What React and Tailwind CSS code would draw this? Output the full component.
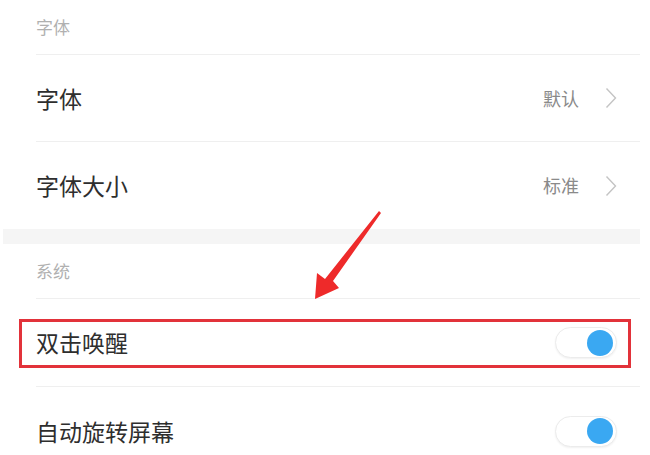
import React from "react";

const font = { fontFamily: '"Noto Sans CJK SC", "Noto Sans", sans-serif' };

function Chevron() {
  return (
    <svg width="12" height="22" viewBox="0 0 12 22" fill="none" className="ml-[26px]">
      <path d="M1.5 1.5 L10.5 11 L1.5 20.5" stroke="#c4c4c4" strokeWidth="1.4" />
    </svg>
  );
}

function Toggle() {
  return (
    <div className="w-[62px] h-[31px] rounded-full bg-white border border-[#ececec] shadow-[0_1px_2px_rgba(0,0,0,0.06)] flex items-center justify-end pr-[3px]">
      <div className="w-[26px] h-[26px] rounded-full bg-[#3aa8f2]" />
    </div>
  );
}

function Header({ title }) {
  return (
    <div className="h-[55px] ml-[36px] mr-[10px] border-b border-[#efefef] flex items-center">
      <span className="text-[17px] text-[#b0b0b0]">{title}</span>
    </div>
  );
}

function LinkRow({ label, value, last }) {
  return (
    <div
      className={
        "h-[87px] ml-[36px] mr-[10px] flex items-center justify-between pr-[23px] " +
        (last ? "" : "border-b border-[#efefef]")
      }
    >
      <span className="text-[23px] text-[#2e2e2e]">{label}</span>
      <div className="flex items-center">
        <span className="text-[18px] text-[#8a8a8a]">{value}</span>
        <Chevron />
      </div>
    </div>
  );
}

function SwitchRow({ label, last, children }) {
  return (
    <div
      className={
        "relative h-[88px] ml-[36px] mr-[10px] flex items-center justify-between pr-[23px] " +
        (last ? "" : "border-b border-[#efefef]")
      }
    >
      <span className="text-[23px] text-[#2e2e2e]">{label}</span>
      <Toggle />
      {children}
    </div>
  );
}

export default function App() {
  return (
    <div className="relative w-[650px] h-[455px] overflow-hidden bg-white" style={font}>
      <Header title="字体" />
      <LinkRow label="字体" value="默认" />
      <LinkRow label="字体大小" value="标准" last />
      <div className="h-[15px] bg-[#f5f5f5] ml-[3px] mr-[10px]" />
      <Header title="系统" />
      <SwitchRow label="双击唤醒">
        {/* red annotation box */}
        <div className="absolute left-[-17px] right-[9px] top-[20px] h-[49px] border-[3px] border-[#e2323a]" />
      </SwitchRow>
      <SwitchRow label="自动旋转屏幕" last />

      {/* red annotation arrow */}
      <svg className="absolute left-0 top-0 pointer-events-none" width="650" height="455">
        <path d="M379 211 L381 213 L333 281 L339 288 L315 299 L317 273 L325 279 Z" fill="#ee2a2a" />
      </svg>
    </div>
  );
}
